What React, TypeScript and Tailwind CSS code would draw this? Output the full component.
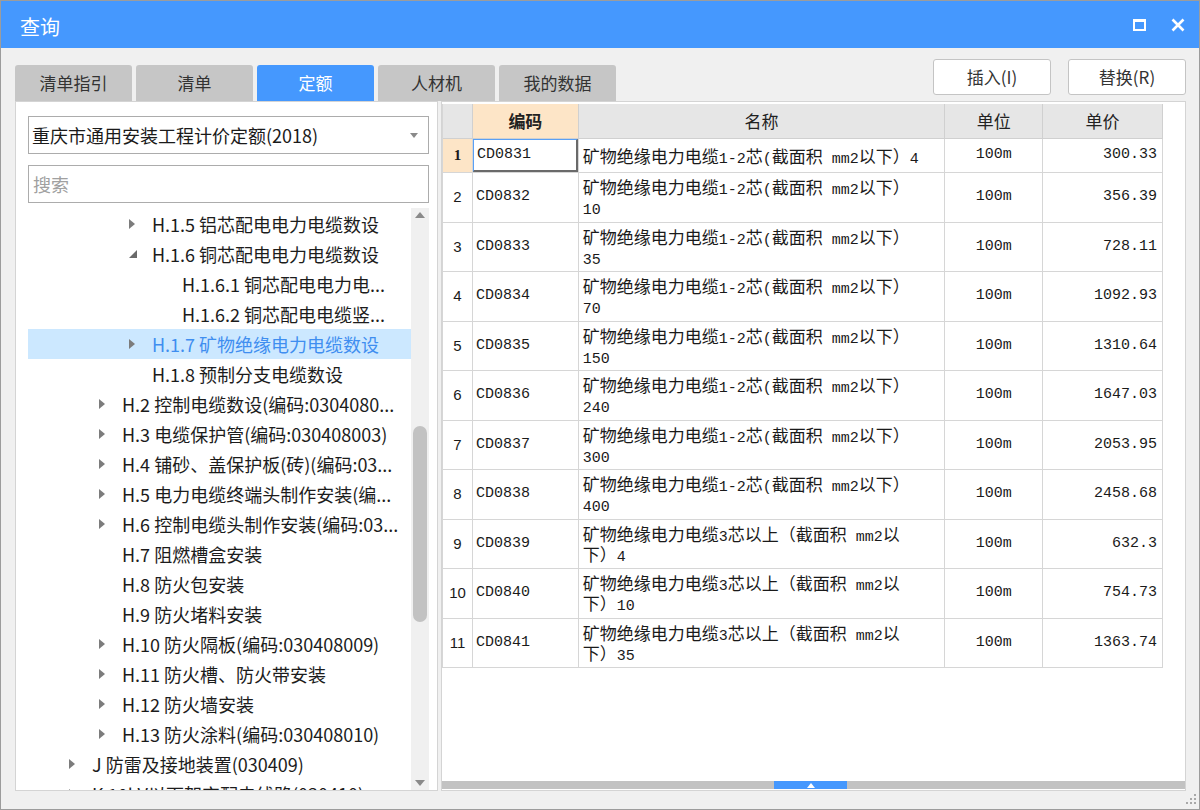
import React from 'react';

const ui = { fontFamily: '"Noto Sans CJK SC", "Noto Sans", sans-serif' };
const mono = { fontFamily: '"Liberation Mono", "Noto Sans CJK SC", monospace' };

type TreeItem = { depth: number; arrow?: 'right' | 'down'; text: string; selected?: boolean };

const tree: TreeItem[] = [
  { depth: 2, arrow: 'right', text: 'H.1.5 铝芯配电电力电缆数设' },
  { depth: 2, arrow: 'down', text: 'H.1.6 铜芯配电电力电缆数设' },
  { depth: 3, text: 'H.1.6.1 铜芯配电电力电...' },
  { depth: 3, text: 'H.1.6.2 铜芯配电电缆竖...' },
  { depth: 2, arrow: 'right', text: 'H.1.7 矿物绝缘电力电缆数设', selected: true },
  { depth: 2, text: 'H.1.8 预制分支电缆数设' },
  { depth: 1, arrow: 'right', text: 'H.2 控制电缆数设(编码:0304080...' },
  { depth: 1, arrow: 'right', text: 'H.3 电缆保护管(编码:030408003)' },
  { depth: 1, arrow: 'right', text: 'H.4 铺砂、盖保护板(砖)(编码:03...' },
  { depth: 1, arrow: 'right', text: 'H.5 电力电缆终端头制作安装(编...' },
  { depth: 1, arrow: 'right', text: 'H.6 控制电缆头制作安装(编码:03...' },
  { depth: 1, text: 'H.7 阻燃槽盒安装' },
  { depth: 1, text: 'H.8 防火包安装' },
  { depth: 1, text: 'H.9 防火堵料安装' },
  { depth: 1, arrow: 'right', text: 'H.10 防火隔板(编码:030408009)' },
  { depth: 1, arrow: 'right', text: 'H.11 防火槽、防火带安装' },
  { depth: 1, arrow: 'right', text: 'H.12 防火墙安装' },
  { depth: 1, arrow: 'right', text: 'H.13 防火涂料(编码:030408010)' },
  { depth: 0, arrow: 'right', text: 'J 防雷及接地装置(030409)' },
  { depth: 0, arrow: 'right', text: 'K 10kV以下架空配电线路(030410)' },
];

// left offset of the arrow column per depth
const indent: Record<number, string> = {
  0: 'pl-[41px]',
  1: 'pl-[71px]',
  2: 'pl-[101px]',
  3: 'pl-[131px]',
};

const A = '矿物绝缘电力电缆1-2芯(截面积 mm2以下）';
const B = '矿物绝缘电力电缆3芯以上（截面积 mm2以';

const rows = [
  { code: 'CD0831', name: [A + '4'], price: '300.33' },
  { code: 'CD0832', name: [A, '10'], price: '356.39' },
  { code: 'CD0833', name: [A, '35'], price: '728.11' },
  { code: 'CD0834', name: [A, '70'], price: '1092.93' },
  { code: 'CD0835', name: [A, '150'], price: '1310.64' },
  { code: 'CD0836', name: [A, '240'], price: '1647.03' },
  { code: 'CD0837', name: [A, '300'], price: '2053.95' },
  { code: 'CD0838', name: [A, '400'], price: '2458.68' },
  { code: 'CD0839', name: [B, '下）4'], price: '632.3' },
  { code: 'CD0840', name: [B, '下）10'], price: '754.73' },
  { code: 'CD0841', name: [B, '下）35'], price: '1363.74' },
];

// ascii runs in the narrow mono face, chinese in the ui face
function Mixed({ text }: { text: string }) {
  const parts = text.split(/([\x20-\x7e]+)/).filter(Boolean);
  return (
    <>
      {parts.map((p, i) =>
        /^[\x20-\x7e]+$/.test(p) ? (
          <span key={i} className="text-[15px] whitespace-pre" style={mono}>
            {p}
          </span>
        ) : (
          <span key={i} className="text-[17px]" style={ui}>
            {p}
          </span>
        )
      )}
    </>
  );
}

function Arrow({ dir }: { dir?: 'right' | 'down' }) {
  if (dir === 'right')
    return (
      <svg width="6" height="10" viewBox="0 0 6 10">
        <path d="M0 0 L6 5 L0 10 Z" fill="#7c7c7c" />
      </svg>
    );
  if (dir === 'down')
    return (
      <svg width="8" height="8" viewBox="0 0 8 8">
        <path d="M8 0 L8 8 L0 8 Z" fill="#6a6a6a" />
      </svg>
    );
  return null;
}

const tabs = ['清单指引', '清单', '定额', '人材机', '我的数据'];

export default function App() {
  return (
    <div className="w-[1200px] h-[810px] flex flex-col border border-[#9c9c9c] bg-[#f0f0f0] overflow-hidden" style={ui}>
      {/* Title bar */}
      <div className="h-[47px] shrink-0 bg-[#4598fe] flex items-center justify-between pl-[19px] pr-[14px] pt-[4px]">
        <span className="text-[20px] text-white leading-none">查询</span>
        <div className="flex items-center gap-[25px] -mt-[4px]">
          <div className="w-[13px] h-[12px] border-[2px] border-white border-t-[3px]" />
          <svg width="14" height="14" viewBox="0 0 14 14">
            <path d="M1.5 1.5 L12.5 12.5 M12.5 1.5 L1.5 12.5" stroke="white" strokeWidth="2.6" />
          </svg>
        </div>
      </div>

      <div className="flex-1 min-h-0 flex flex-col pl-[14px] pr-[13px] pb-[18px]">
        {/* Tabs + buttons */}
        <div className="h-[53px] shrink-0 flex justify-between">
          <div className="flex gap-[4px] self-end">
            {tabs.map((t) => (
              <div
                key={t}
                className={`w-[117px] h-[36px] rounded-t-[3px] flex items-center justify-center text-[17px] ${
                  t === '定额' ? 'bg-[#4598fe] text-white' : 'bg-[#c6c6c6] text-[#333333]'
                }`}
              >
                {t}
              </div>
            ))}
          </div>
          <div className="flex gap-[17px] pt-[11px]">
            {['插入(I)', '替换(R)'].map((b) => (
              <div
                key={b}
                className="w-[118px] h-[36px] bg-white border border-[#c4c4c4] rounded-[3px] flex items-center justify-center text-[17px] text-[#333333]"
              >
                {b}
              </div>
            ))}
          </div>
        </div>

        {/* Main area */}
        <div className="flex-1 flex gap-[3px] min-h-0">
          {/* Left panel */}
          <div className="w-[423px] bg-white border border-[#d4d4d4] flex flex-col pl-[12px] pr-[8px] pt-[14px] min-h-0">
            <div className="h-[38px] shrink-0 border border-[#acacac] flex items-center justify-between pl-[3px] pr-[10px]">
              <span className="text-[18px] text-[#1a1a1a]">重庆市通用安装工程计价定额(2018)</span>
              <svg width="8" height="5" viewBox="0 0 8 5">
                <path d="M0 0 L8 0 L4 5 Z" fill="#8a8a8a" />
              </svg>
            </div>
            <div className="h-[38px] mt-[11px] shrink-0 border border-[#acacac] flex items-center pl-[4px]">
              <span className="text-[18px] text-[#a0a0a0]">搜索</span>
            </div>
            <div className="flex-1 mt-[5px] flex min-h-0 overflow-hidden">
              <div className="flex-1 flex flex-col pt-[1px] overflow-hidden">
                {tree.map((it) => (
                  <div
                    key={it.text}
                    className={`h-[30px] shrink-0 flex items-center ${indent[it.depth]} ${
                      it.selected ? 'bg-[#cce8ff] text-[#3f8ef0]' : 'text-[#1c1c1c]'
                    }`}
                  >
                    <div className="w-[23px] flex items-center">
                      <Arrow dir={it.arrow} />
                    </div>
                    <span className="text-[18px] whitespace-nowrap">{it.text}</span>
                  </div>
                ))}
              </div>
              {/* vertical scrollbar */}
              <div className="w-[18px] shrink-0 bg-[#f0f0f0] flex flex-col items-center py-[4px]">
                <svg width="10" height="6" viewBox="0 0 10 6">
                  <path d="M0 6 L5 0 L10 6 Z" fill="#8a8a8a" />
                </svg>
                <div className="flex-1 w-full flex flex-col items-center pt-[208px] pb-[158px]">
                  <div className="flex-1 w-[14px] rounded-full bg-[#c2c2c2]" />
                </div>
                <svg width="10" height="6" viewBox="0 0 10 6">
                  <path d="M0 0 L10 0 L5 6 Z" fill="#8a8a8a" />
                </svg>
              </div>
            </div>
          </div>

          {/* Right panel */}
          <div className="flex-1 bg-white border border-[#d4d4d4] flex flex-col pt-[2px] min-h-0">
            <div className="flex flex-col w-[721px] border-l border-[#d6d6d6]">
              {/* header */}
              <div className="h-[35px] flex bg-[#e6e6e6] border-b border-[#d0d0d0] text-[17px] text-[#222222]">
                <div className="w-[30px] border-r border-[#d0d0d0]" />
                <div className="w-[106px] border-r border-[#d0d0d0] bg-[#fde5c7] flex items-center justify-center font-bold">编码</div>
                <div className="w-[367px] border-r border-[#d0d0d0] flex items-center justify-center">名称</div>
                <div className="w-[98px] border-r border-[#d0d0d0] flex items-center justify-center">单位</div>
                <div className="w-[120px] border-r border-[#d0d0d0] flex items-center justify-center">单价</div>
              </div>
              {rows.map((r, i) => (
                <div
                  key={r.code}
                  className={`flex border-b border-[#d6d6d6] text-[#1a1a1a] ${i === 0 ? 'h-[34px]' : 'h-[49.5px]'}`}
                >
                  <div
                    className={`w-[30px] border-r border-[#d6d6d6] flex items-center justify-center text-[15px] ${
                      i === 0 ? 'bg-[#fde5c7] font-bold' : ''
                    }`}
                    style={{ fontFamily: i === 0 ? '"Liberation Serif", serif' : '"Liberation Sans", sans-serif' }}
                  >
                    {i + 1}
                  </div>
                  <div className="w-[106px] border-r border-[#d6d6d6] flex items-stretch">
                    <div
                      className={`flex-1 flex items-center pl-[3px] text-[15px] ${
                        i === 0 ? 'border-l border-t border-[#5aa0f5] border-r-2 border-b-2 border-r-[#6a6a6a] border-b-[#6a6a6a]' : ''
                      }`}
                      style={mono}
                    >
                      {r.code}
                    </div>
                  </div>
                  <div className="w-[367px] border-r border-[#d6d6d6] flex flex-col justify-center pl-[4px] leading-[20px] whitespace-nowrap">
                    {r.name.map((l) => (
                      <div key={l} className="h-[20px]">
                        <Mixed text={l} />
                      </div>
                    ))}
                  </div>
                  <div className="w-[98px] border-r border-[#d6d6d6] flex items-center justify-center text-[15px]" style={mono}>
                    100m
                  </div>
                  <div className="w-[120px] border-r border-[#d6d6d6] flex items-center justify-end pr-[5px] text-[15px]" style={mono}>
                    {r.price}
                  </div>
                </div>
              ))}
            </div>
            <div className="flex-1" />
            {/* horizontal scrollbar */}
            <div className="h-[8px] mb-[1px] shrink-0 bg-[#c2c2c2] flex pl-[332px]">
              <div className="w-[73px] h-full bg-[#4598fe] flex items-center justify-center">
                <svg width="8" height="5" viewBox="0 0 8 5">
                  <path d="M0 5 L4 0 L8 5 Z" fill="white" />
                </svg>
              </div>
            </div>
          </div>
        </div>
      </div>

      {/* resize grip */}
      <div className="h-0 relative">
        <svg className="absolute right-[2px] bottom-[3px]" width="12" height="12" viewBox="0 0 12 12">
          <rect x="9" y="0" width="2" height="2" fill="#a8a8a8" />
          <rect x="5" y="4" width="2" height="2" fill="#a8a8a8" />
          <rect x="9" y="4" width="2" height="2" fill="#a8a8a8" />
          <rect x="1" y="8" width="2" height="2" fill="#a8a8a8" />
          <rect x="5" y="8" width="2" height="2" fill="#a8a8a8" />
          <rect x="9" y="8" width="2" height="2" fill="#a8a8a8" />
        </svg>
      </div>
    </div>
  );
}
